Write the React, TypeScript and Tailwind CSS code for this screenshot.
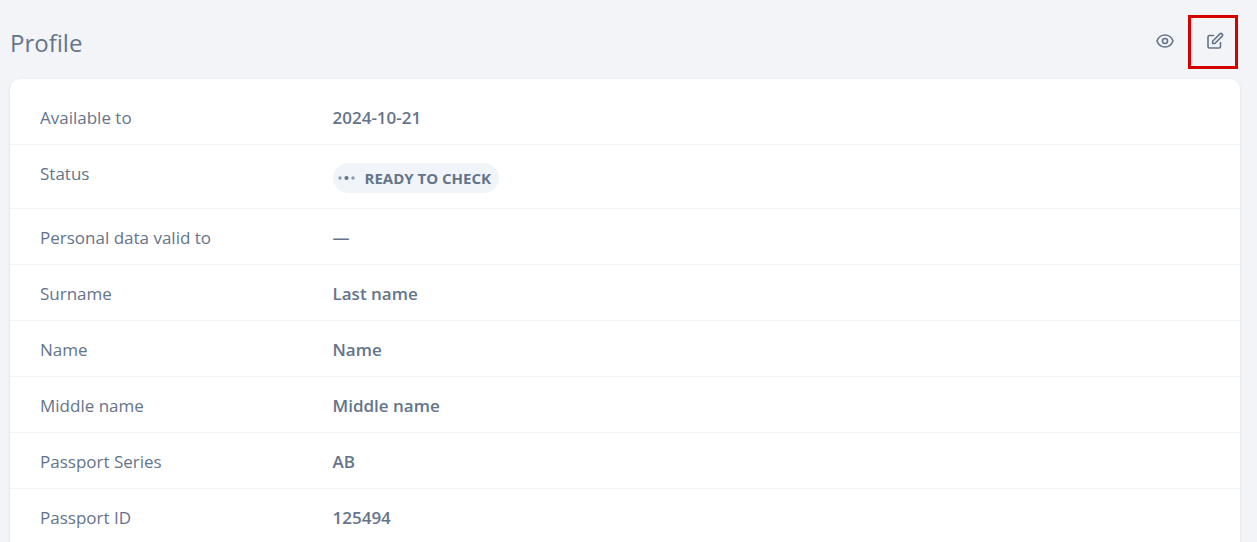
import type { ReactNode } from 'react';

type Field = { label: string; value: ReactNode };

function EyeIcon() {
  return (
    <svg viewBox="0 0 18 14" className="h-3.5 w-[18px]" fill="none" stroke="currentColor" strokeWidth="1.6" aria-hidden="true">
      <path d="M1 7C2.4 3.2 5.3 1 9 1s6.600 2.200 8 6c-1.400 3.800-4.300 6-8 6S2.400 10.800 1 7Z" strokeLinejoin="round" />
      <circle cx="9" cy="7" r="2.500" />
    </svg>
  );
}

function EditIcon() {
  return (
    <svg viewBox="0 0 18 18" className="size-[18px]" fill="none" stroke="currentColor" strokeWidth="1.6" strokeLinecap="round" strokeLinejoin="round" aria-hidden="true">
      <path d="M7.500 3.500H3.500A1.500 1.500 0 0 0 2 5v9.500A1.500 1.500 0 0 0 3.500 16H13a1.500 1.500 0 0 0 1.500-1.500V10.500" />
      <path d="M6.600 9.200 13.900 1.900a1.600 1.600 0 0 1 2.260 2.260L8.860 11.460 6.600 11.460Z" />
    </svg>
  );
}

function StatusBadge({ children }: { children: ReactNode }) {
  return (
    <span className="mt-[3px] mb-[2px] flex h-[30px] w-fit items-center gap-[10px] rounded-full bg-[#f1f5f9] pr-[8px] pl-[5px] text-[15px] leading-[20px] font-bold">
      <svg viewBox="0 0 17 6" className="h-1.5 w-[17px]" fill="currentColor" aria-hidden="true">
        <circle cx="2" cy="3" r="1.700" opacity="0.7" />
        <circle cx="8.500" cy="3" r="2.100" />
        <circle cx="15" cy="3" r="1.700" opacity="0.7" />
      </svg>
      {children}
    </span>
  );
}

const fields: Field[] = [
  { label: 'Available to', value: '2024-10-21' },
  { label: 'Status', value: <StatusBadge>READY TO CHECK</StatusBadge> },
  { label: 'Personal data valid to', value: '—' },
  { label: 'Surname', value: 'Last name' },
  { label: 'Name', value: 'Name' },
  { label: 'Middle name', value: 'Middle name' },
  { label: 'Passport Series', value: 'AB' },
  { label: 'Passport ID', value: '125494' },
];

export default function App() {
  return (
    <main className="min-h-screen bg-[#f3f4f8] pr-[17px] pl-[10px] font-['Open_Sans','Noto_Sans',sans-serif] text-[#64748b]">
      <header className="flex items-start justify-between pt-[15px] pr-[2px] pb-[10px]">
        <h1 className="pt-[10px] text-[24px] leading-[36px] font-normal">Profile</h1>
        <div className="flex items-start gap-[5px]">
          <button type="button" aria-label="View profile" className="flex h-[52px] w-9 items-center justify-center">
            <EyeIcon />
          </button>
          <button type="button" aria-label="Edit profile" className="flex h-[54px] w-[50px] items-center justify-center border-[3px] border-[#d60000] pb-[2px] pl-1">
            <EditIcon />
          </button>
        </div>
      </header>
      <dl className="rounded-t-[10px] bg-white pt-[10px] shadow-[0_1px_3px_rgba(15,23,42,0.12)]">
        {fields.map(({ label, value }) => (
          <div key={label} className="flex border-b border-[#f1f5f9] px-[30px] pt-[15px] pb-[13px] text-[17px] leading-[27px] last:border-b-0">
            <dt className="w-1/4 shrink-0 font-normal">{label}</dt>
            <dd className="font-semibold">{value}</dd>
          </div>
        ))}
      </dl>
    </main>
  );
}
